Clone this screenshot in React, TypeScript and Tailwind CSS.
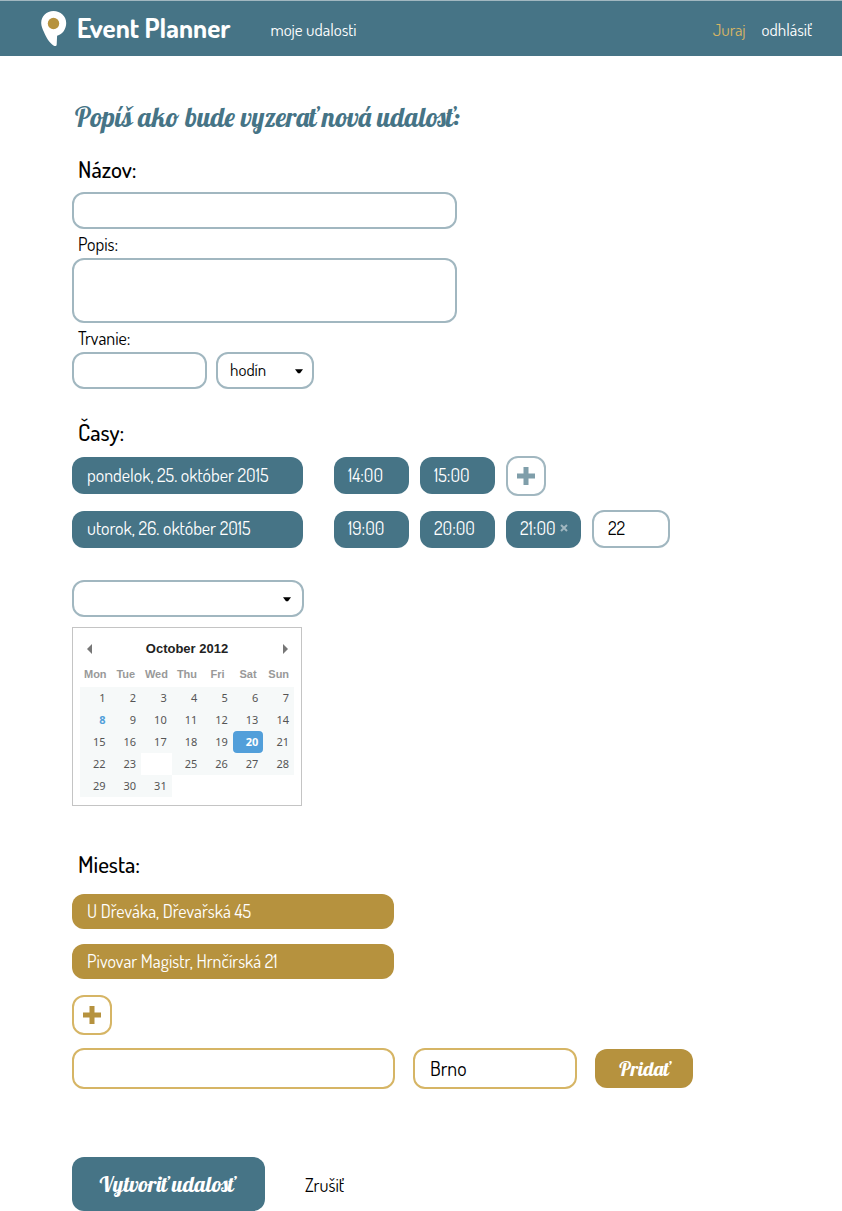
import React from "react";

const field = "rounded-xl border-2 border-[#a1b7c0] bg-white outline-none";
const goldField = "rounded-xl border-2 border-[#d6b565] bg-white outline-none";
const script = "font-['Lobster','Liberation_Serif',serif] font-normal";

function Caret({ className }: { className: string }) {
  return (
    <svg className={`pointer-events-none absolute ${className}`} width="8" height="5" viewBox="0 0 8 5" aria-hidden="true">
      <path d="M0 .3h8L5 4.2H3z" fill="#000" />
    </svg>
  );
}

function Plus() {
  return (
    <svg width="18" height="18" viewBox="0 0 18 18" fill="currentColor" aria-hidden="true">
      <path d="M6.5 0h5v6.5H18v5h-6.5V18h-5v-6.5H0v-5h6.5z" />
    </svg>
  );
}

function Logo() {
  return (
    <svg width="26" height="36" viewBox="0 0 26 36" aria-hidden="true">
      <path
        d="M12.500 0C5.500 0 .2 5.200.2 12c0 3.200 1.400 6 2.600 8.800C5 26 8.300 32 12.800 34.700c1.500.8 2.800.3 2.900-1.300l.4-8.700C21.500 23.500 25.200 18 25.200 12 25.200 5.200 19.500 0 12.500 0z"
        fill="#fff"
      />
      <circle cx="12.500" cy="12.500" r="5.700" fill="#b6923e" />
    </svg>
  );
}

function TimeChip({ time, removable }: { time: string; removable?: boolean }) {
  return (
    <div className="flex h-[37px] w-[75px] items-center gap-1 rounded-xl bg-[#467486] pb-0.5 pl-3.5 text-white">
      <span>{time}</span>
      {removable && (
        <button type="button" aria-label={`Odstrániť ${time}`} className="text-[#a1b7c0]">
          <svg width="8" height="8" viewBox="0 0 8 8" aria-hidden="true">
            <path d="M1 1l6 6M7 1L1 7" stroke="currentColor" strokeWidth="2" />
          </svg>
        </button>
      )}
    </div>
  );
}

function DayChip({ day }: { day: string }) {
  return <div className="flex h-[37px] w-[231px] items-center rounded-xl bg-[#467486] pb-0.5 pl-[15px] text-white">{day}</div>;
}

function PlaceChip({ place }: { place: string }) {
  return <li className="flex h-[35px] items-center rounded-xl bg-[#b6923e] pb-0.5 pl-[15px] text-white">{place}</li>;
}

const weekdays = ["Mon", "Tue", "Wed", "Thu", "Fri", "Sat", "Sun"];
const weeks: (number | null)[][] = [
  [1, 2, 3, 4, 5, 6, 7],
  [8, 9, 10, 11, 12, 13, 14],
  [15, 16, 17, 18, 19, 20, 21],
  [22, 23, null, 25, 26, 27, 28],
  [29, 30, 31, null, null, null, null],
];

function dayClass(day: number | null) {
  if (day === null) return "bg-white";
  if (day === 20) return "rounded-sm bg-[#529fda] font-bold text-white";
  if (day === 8) return "bg-[#f6f9f9] font-bold text-[#529fda]";
  return "bg-[#f6f9f9] text-[#555]";
}

function Calendar() {
  return (
    <div className="mt-[10px] h-[179px] w-[230px] border border-[#c4c4c4] px-[7px] pt-[10px]">
      <div className="flex h-[22px] items-center justify-between px-1.5 font-['Liberation_Sans',sans-serif] text-[13px] font-bold text-[#222]">
        <button type="button" aria-label="Predchádzajúci mesiac">
          <svg width="6" height="10" viewBox="0 0 6 10" aria-hidden="true">
            <path d="M6 0v10L1 5z" fill="#777" />
          </svg>
        </button>
        <span>October 2012</span>
        <button type="button" aria-label="Nasledujúci mesiac">
          <svg width="6" height="10" viewBox="0 0 6 10" aria-hidden="true">
            <path d="M1 0v10l5-5z" fill="#777" />
          </svg>
        </button>
      </div>
      <table className="w-full table-fixed border-collapse">
        <thead>
          <tr className="h-[27px] font-['Liberation_Sans',sans-serif] text-[11px] text-[#999]">
            {weekdays.map((d) => (
              <th key={d} className="p-0 text-center leading-4">{d}</th>
            ))}
          </tr>
        </thead>
        <tbody className="font-['Noto_Sans',sans-serif] text-[11px]">
          {weeks.map((week, i) => (
            <tr key={i} className="h-[22px]">
              {week.map((day, j) => (
                <td key={j} className={`p-0 pr-[5px] text-right leading-[22px] ${dayClass(day)}`}>{day}</td>
              ))}
            </tr>
          ))}
        </tbody>
      </table>
    </div>
  );
}

export default function App() {
  return (
    <div className="min-h-screen bg-white font-['Dosis','Lato',sans-serif] text-lg text-black">
      <header className="flex h-14 items-center border-t border-[#a1b7c0] bg-[#467486] pr-[30px] pl-[41px] text-white">
        <a href="#" className="flex items-center gap-2.5">
          <Logo />
          <span className="pb-1 text-[27px] leading-8 font-bold">Event Planner</span>
        </a>
        <nav className="ml-10 flex flex-1 items-center pt-1 text-[17px]">
          <a href="#">moje udalosti</a>
          <a href="#" className="ml-auto text-[#d6b565]">Juraj</a>
          <a href="#" className="ml-4">odhlásiť</a>
        </nav>
      </header>

      <form className="px-[72px]" onSubmit={(e) => e.preventDefault()}>
        <h1 className={`mt-[43px] pl-[3px] text-[27px] leading-9 whitespace-nowrap text-[#467486] ${script}`}>
          Popíš ako bude vyzerať nová udalosť:
        </h1>

        <div className="flex max-w-[385px] flex-col">
          <label htmlFor="name" className="mt-5 pl-1.5 text-[23px] leading-7 font-medium">Názov:</label>
          <input id="name" className={`mt-[9px] h-[37px] px-3 ${field}`} />
          <label htmlFor="description" className="mt-[3px] pl-1.5 leading-6">Popis:</label>
          <textarea id="description" className={`mt-0.5 h-[65px] resize-none px-3 py-2 ${field}`} />
          <label htmlFor="duration" className="mt-[3px] mb-0.5 pl-1.5 leading-6">Trvanie:</label>
          <div className="flex gap-[9px]">
            <input id="duration" className={`h-[37px] w-[135px] px-3 ${field}`} />
            <div className="relative">
              <select aria-label="Jednotka trvania" className={`h-[37px] w-[98px] appearance-none pl-3 text-[17px] ${field}`}>
                <option>hodín</option>
              </select>
              <Caret className="top-[17px] right-[11px]" />
            </div>
          </div>
        </div>

        <section>
          <h2 className="mt-[27px] mb-[9px] pl-1.5 text-[23px] leading-8 font-medium">Časy:</h2>
          <div className="flex items-center">
            <DayChip day="pondelok, 25. október 2015" />
            <div className="ml-[31px] flex h-[37px] items-center gap-[11px]">
              <TimeChip time="14:00" />
              <TimeChip time="15:00" />
              <button type="button" aria-label="Pridať čas" className={`flex size-10 items-center justify-center text-[#7f9eaa] ${field}`}>
                <Plus />
              </button>
            </div>
          </div>
          <div className="mt-4 flex items-center">
            <DayChip day="utorok, 26. október 2015" />
            <div className="ml-[31px] flex items-center gap-[11px]">
              <TimeChip time="19:00" />
              <TimeChip time="20:00" />
              <TimeChip time="21:00" removable />
              <input aria-label="Nový čas" defaultValue="22" className={`h-[38px] w-[78px] px-3.5 pb-0.5 ${field}`} />
            </div>
          </div>

          <div className="relative mt-8 w-[232px]">
            <select aria-label="Deň" className={`block h-[37px] w-full appearance-none pl-3 ${field}`}>
              <option></option>
            </select>
            <Caret className="top-[17px] right-[13px]" />
          </div>
          <Calendar />
        </section>

        <section>
          <h2 className="mt-[42px] mb-3.5 pl-1.5 text-[23px] leading-8 font-medium">Miesta:</h2>
          <ul className="flex max-w-[322px] flex-col gap-[15px]">
            <PlaceChip place="U Dřeváka, Dřevařská 45" />
            <PlaceChip place="Pivovar Magistr, Hrnčírská 21" />
          </ul>
          <button type="button" aria-label="Pridať miesto" className={`mt-4 flex size-10 items-center justify-center text-[#b6923e] ${goldField}`}>
            <Plus />
          </button>
          <div className="mt-[13px] flex items-center gap-[18px]">
            <input aria-label="Adresa" className={`h-[41px] w-[323px] px-3 ${goldField}`} />
            <input aria-label="Mesto" defaultValue="Brno" className={`h-[41px] w-[164px] px-[15px] pb-0.5 text-xl ${goldField}`} />
            <button type="button" className={`h-[39px] w-[98px] rounded-xl bg-[#b6923e] text-xl text-white ${script}`}>Pridať</button>
          </div>
        </section>

        <div className="mt-[68px] flex items-center gap-10">
          <button type="submit" className={`h-[54px] w-[193px] rounded-xl bg-[#467486] pr-1 text-[22px] text-white ${script}`}>
            Vytvoriť udalosť
          </button>
          <button type="button" className="pt-0.5">Zrušiť</button>
        </div>
      </form>
    </div>
  );
}
